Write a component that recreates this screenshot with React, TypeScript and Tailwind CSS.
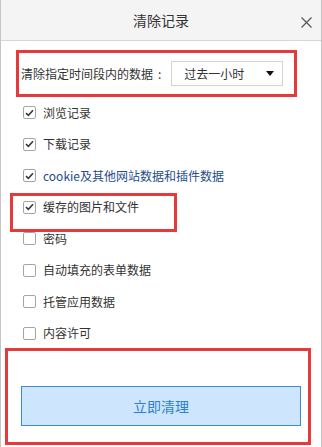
import React from "react";

const items = [
  { label: "浏览记录", checked: true },
  { label: "下载记录", checked: true },
  { label: "cookie及其他网站数据和插件数据", checked: true, link: true },
  { label: "缓存的图片和文件", checked: true, marked: true },
  { label: "密码", checked: false },
  { label: "自动填充的表单数据", checked: false },
  { label: "托管应用数据", checked: false },
  { label: "内容许可", checked: false },
];

const CheckBox = ({ checked }: { checked: boolean }) => (
  <span className="flex h-[13px] w-[13px] shrink-0 items-center justify-center rounded-[2px] border border-[#a5a5a5] bg-white">
    {checked && (
      <svg width="9" height="8" viewBox="0 0 9 8" fill="none">
        <path d="M1 4.2 L3.4 6.4 L8 1.3" stroke="#3a3a3a" strokeWidth="1.6" />
      </svg>
    )}
  </span>
);

export default function App() {
  return (
    <div
      className="flex h-[447px] w-[322px] flex-col overflow-hidden border-x border-[#c4c4c4] bg-white text-[#333]"
      style={{ fontFamily: '"Noto Sans CJK SC", "Noto Sans", sans-serif' }}
    >
      {/* title bar */}
      <div className="relative flex h-[41px] shrink-0 items-center justify-center border-b border-[#d6d6d6] bg-[#f4f4f4]">
        <span className="text-[14px] leading-none text-[#333]">清除记录</span>
        <svg
          className="absolute right-[9px] top-[17px]"
          width="11"
          height="11"
          viewBox="0 0 11 11"
        >
          <path d="M0.5 0.5 L10.5 10.5 M10.5 0.5 L0.5 10.5" stroke="#555" strokeWidth="1.2" />
        </svg>
      </div>

      {/* time range */}
      <div className="ml-[15px] mt-[9px] flex h-[47px] w-[281px] items-center border-[3px] border-[#e5393b] pl-[2px]">
        <span className="text-[12px] leading-none">清除指定时间段内的数据</span>
        <span className="ml-[5px] text-[12px] leading-none">:</span>
        <div className="ml-[10px] flex h-[25px] w-[112px] items-center justify-between border border-[#d4d4d4] bg-white pl-[12px] pr-[8px]">
          <span className="text-[12px] leading-none">过去一小时</span>
          <svg width="8" height="5" viewBox="0 0 8 5">
            <path d="M0 0 H8 L4 5 Z" fill="#111" />
          </svg>
        </div>
      </div>

      {/* options */}
      <div className="flex flex-col">
        {items.map((it) => (
          <div key={it.label} className="relative flex h-[31.5px] items-center gap-[7px] pl-[22px]">
            <CheckBox checked={it.checked} />
            <span
              className={`text-[12px] leading-none ${it.link ? "text-[#264d8c]" : "text-[#333]"}`}
            >
              {it.label}
            </span>
            {it.marked && (
              <div className="pointer-events-none absolute left-[9px] top-[1.5px] h-[39px] w-[167px] border-[3px] border-[#e5393b]" />
            )}
          </div>
        ))}
      </div>

      {/* action */}
      <div className="-mt-px ml-[4px] flex h-[97px] w-[306px] items-end border-[3px] border-[#e5393b] pb-[16px] pl-[13px]">
        <button className="flex h-[40px] w-[280px] items-center justify-center border border-[#3a8ad6] bg-[#cde6fd] text-[14px] text-[#2d7fcf]">
          立即清理
        </button>
      </div>
    </div>
  );
}
